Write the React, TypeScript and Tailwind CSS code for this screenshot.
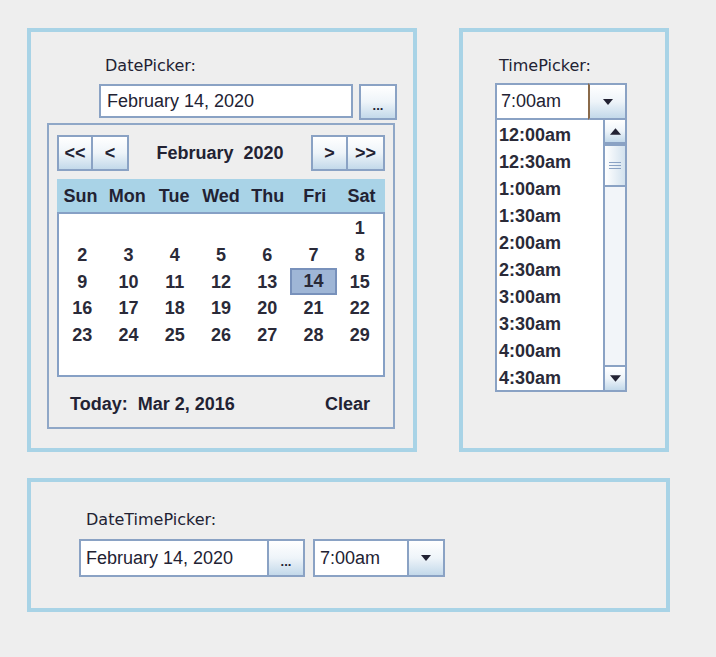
import React from "react";

const sans = "font-['Liberation_Sans',Arial,sans-serif]";
const label = "font-['DejaVu_Sans',sans-serif] text-[16px] leading-[18px] text-[#222233]";
const btn =
  "bg-gradient-to-b from-[#ffffff] via-[#eef4f9] to-[#c3d9ea] border-2 border-[#8aa2c4] flex items-center justify-center";

function DownTri({ w = 10, h = 6 }: { w?: number; h?: number }) {
  return (
    <svg width={w} height={h} viewBox="0 0 10 6">
      <polygon points="0,0 10,0 5,6" fill="#222233" />
    </svg>
  );
}
function UpTri({ w = 10, h = 6 }: { w?: number; h?: number }) {
  return (
    <svg width={w} height={h} viewBox="0 0 10 6">
      <polygon points="0,6 10,6 5,0" fill="#222233" />
    </svg>
  );
}

function Dots() {
  return (
    <div className={`${sans} font-bold text-[13px] leading-none text-[#222233] tracking-[0px] mt-[6px]`}>...</div>
  );
}

const days: (number | null)[] = [
  null, null, null, null, null, null, 1,
  2, 3, 4, 5, 6, 7, 8,
  9, 10, 11, 12, 13, 14, 15,
  16, 17, 18, 19, 20, 21, 22,
  23, 24, 25, 26, 27, 28, 29,
  null, null, null, null, null, null, null,
];

const times = [
  "12:00am", "12:30am", "1:00am", "1:30am", "2:00am",
  "2:30am", "3:00am", "3:30am", "4:00am", "4:30am",
];

export default function App() {
  return (
    <div className="w-[716px] h-[657px] bg-[#eeeeee] overflow-hidden pt-[28px] pl-[27px]">
      <div className="flex gap-[42px]">
        {/* DatePicker panel */}
        <div className="w-[390px] h-[424px] border-4 border-[#a8d3e6] flex flex-col">
          <div className={`${label} ml-[74px] mt-[25px]`}>DatePicker:</div>
          <div className="flex ml-[68px] mt-[9px] gap-[6px] items-start">
            <div className={`w-[254px] h-[34px] border-2 border-[#8aa2c4] bg-white pl-[6px] flex items-center ${sans} text-[18px] text-[#222233]`}>
              February 14, 2020
            </div>
            <div className={`${btn} w-[38px] h-[36px]`}>
              <Dots />
            </div>
          </div>
          <div className="ml-[16px] mt-[3px] w-[348px] h-[306px] border-2 border-[#8fa7c7] pl-[8px] pr-[8px] pt-[10px] flex flex-col">
            <div className={`flex h-[36px] ${sans} font-bold text-[18px] text-[#222233]`}>
              <div className={`${btn} w-[36px]`}>&lt;&lt;</div>
              <div className={`${btn} w-[36px] border-l-0`}>&lt;</div>
              <div className="flex-1 flex items-center justify-center whitespace-pre">February  2020</div>
              <div className={`${btn} w-[37px]`}>&gt;</div>
              <div className={`${btn} w-[37px] border-l-0`}>&gt;&gt;</div>
            </div>
            <div className={`mt-[8px] h-[33px] pt-[2px] bg-[#a9d3e7] grid grid-cols-7 items-center text-center ${sans} font-bold text-[18px] text-[#222233]`}>
              {["Sun", "Mon", "Tue", "Wed", "Thu", "Fri", "Sat"].map((d) => (
                <div key={d}>{d}</div>
              ))}
            </div>
            <div className={`h-[165px] border-2 border-[#86a0c5] bg-white grid grid-cols-7 grid-rows-6 ${sans} font-bold text-[18px] text-[#2a2a38]`}>
              {days.map((d, i) => (
                <div
                  key={i}
                  className={
                    d === 14
                      ? "flex items-center justify-center pt-[1px] bg-[#9fb6d6] border-2 border-[#7891bb]"
                      : "flex items-center justify-center pt-[2px]"
                  }
                >
                  {d ?? ""}
                </div>
              ))}
            </div>
            <div className={`flex justify-between mt-[17px] pl-[13px] pr-[15px] ${sans} font-bold text-[18px] leading-[20px] text-[#222233]`}>
              <span className="whitespace-pre">Today:  Mar 2, 2016</span>
              <span>Clear</span>
            </div>
          </div>
        </div>

        {/* TimePicker panel */}
        <div className="w-[210px] h-[424px] border-4 border-[#a8d3e6] flex flex-col">
          <div className={`${label} ml-[36px] mt-[25px]`}>TimePicker:</div>
          <div className="ml-[32px] mt-[8px] w-[132px] h-[37px] flex">
            <div className={`w-[93px] h-full border-2 border-r-0 border-[#8aa2c4] bg-white pl-[4px] flex items-center ${sans} text-[18px] text-[#222233]`}>
              7:00am
            </div>
            <div className={`${btn} flex-1 border-l-[#8a6a4a]`}>
              <DownTri />
            </div>
          </div>
          <div className="ml-[32px] w-[132px] h-[272px] border-2 border-t-0 border-[#8aa2c4] bg-white flex">
            <div className={`flex-1 ${sans} font-bold text-[18px] text-[#2a2a38] pl-[2px] pt-[2px]`}>
              {times.map((t) => (
                <div key={t} className="h-[27px] flex items-center">
                  {t}
                </div>
              ))}
            </div>
            <div className="w-[22px] h-full border-l-2 border-[#8aa2c4] bg-[#f2f5f9] flex flex-col">
              <div className={`${btn} h-[24px] border-t-0 border-r-0 border-l-0`}>
                <UpTri w={11} h={7} />
              </div>
              <div className="h-[43px] bg-gradient-to-r from-[#ffffff] to-[#d3e2ee] border-y-2 border-[#8aa2c4] flex flex-col items-center justify-center gap-[2px]">
                <div className="w-[12px] h-[1px] bg-[#8aa2c4]" />
                <div className="w-[12px] h-[1px] bg-[#8aa2c4]" />
                <div className="w-[12px] h-[1px] bg-[#8aa2c4]" />
              </div>
              <div className="flex-1" />
              <div className={`${btn} h-[25px] border-b-0 border-r-0 border-l-0`}>
                <DownTri w={11} h={7} />
              </div>
            </div>
          </div>
        </div>
      </div>

      {/* DateTimePicker panel */}
      <div className="mt-[26px] w-[643px] h-[134px] border-4 border-[#a8d3e6] flex flex-col">
        <div className={`${label} ml-[55px] mt-[29px]`}>DateTimePicker:</div>
        <div className="flex ml-[48px] mt-[10px] items-start">
          <div className={`w-[188px] h-[38px] border-2 border-r-0 border-[#8aa2c4] bg-white pl-[5px] flex items-center ${sans} text-[18px] text-[#222233]`}>
            February 14, 2020
          </div>
          <div className={`${btn} w-[38px] h-[38px]`}>
            <Dots />
          </div>
          <div className={`ml-[8px] w-[94px] h-[38px] border-2 border-r-0 border-[#8aa2c4] bg-white pl-[5px] flex items-center ${sans} text-[18px] text-[#222233]`}>
            7:00am
          </div>
          <div className={`${btn} w-[38px] h-[38px]`}>
            <DownTri />
          </div>
        </div>
      </div>
    </div>
  );
}
